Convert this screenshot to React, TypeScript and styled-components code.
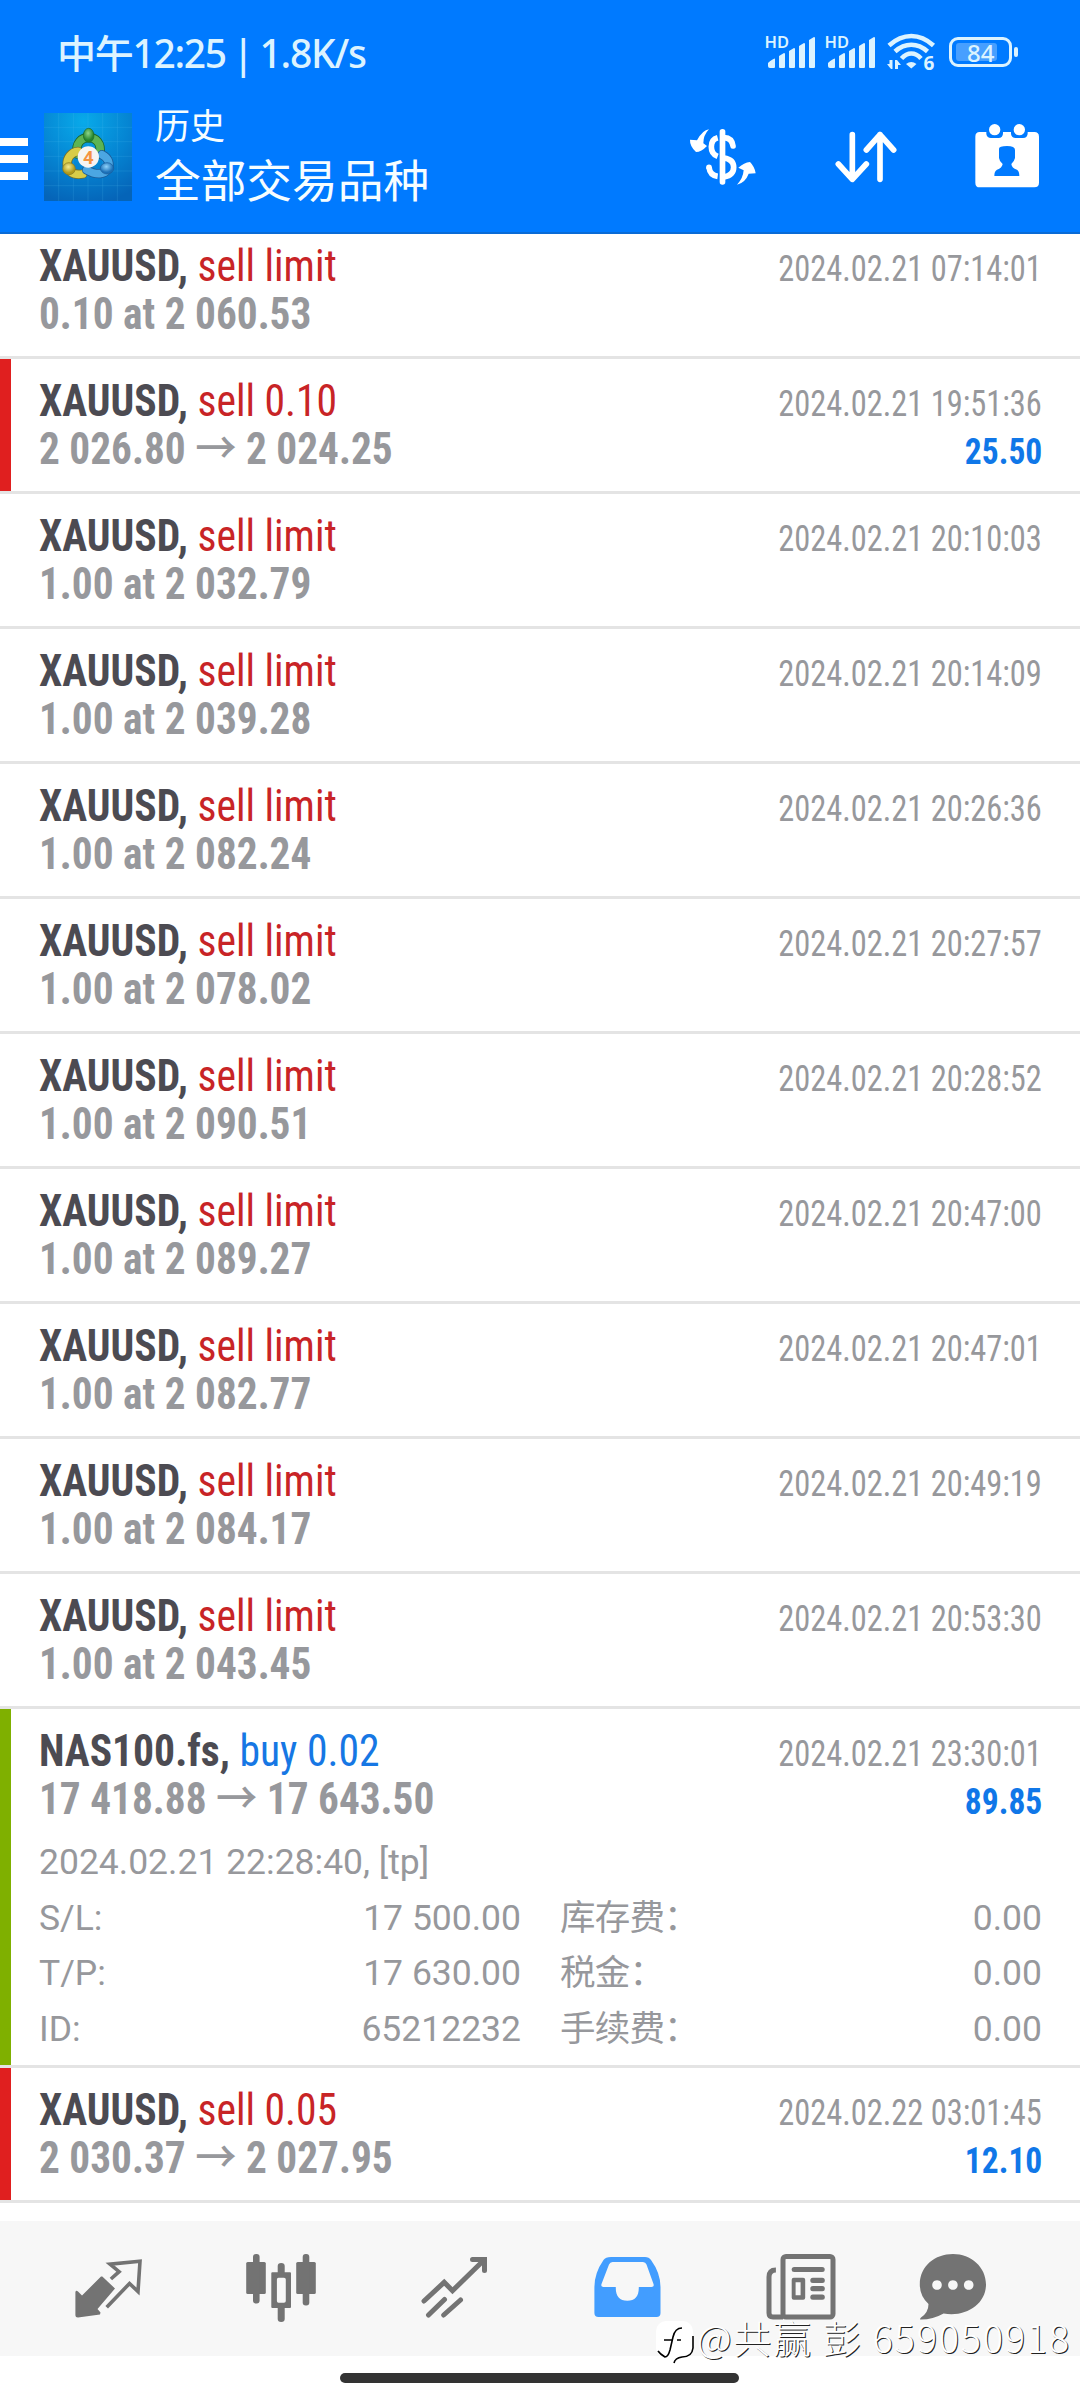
import React from 'react';
import styled, { createGlobalStyle } from 'styled-components';

type Side = 'sell' | 'buy';

interface HistoryItem {
  symbol: string;
  side: Side;
  action: string;
  price: string;
  closePrice?: string;
  time: string;
  profit?: string;
  marker?: string;
  comment?: string;
  details?: string[][];
}

const RED = '#e01f1f';
const GREEN = '#7fb000';

const limit = (price: string, time: string): HistoryItem => ({
  symbol: 'XAUUSD',
  side: 'sell',
  action: 'sell limit',
  price,
  time,
});

const items: HistoryItem[] = [
  limit('0.10 at 2 060.53', '2024.02.21 07:14:01'),
  {
    symbol: 'XAUUSD',
    side: 'sell',
    action: 'sell 0.10',
    price: '2 026.80',
    closePrice: '2 024.25',
    time: '2024.02.21 19:51:36',
    profit: '25.50',
    marker: RED,
  },
  limit('1.00 at 2 032.79', '2024.02.21 20:10:03'),
  limit('1.00 at 2 039.28', '2024.02.21 20:14:09'),
  limit('1.00 at 2 082.24', '2024.02.21 20:26:36'),
  limit('1.00 at 2 078.02', '2024.02.21 20:27:57'),
  limit('1.00 at 2 090.51', '2024.02.21 20:28:52'),
  limit('1.00 at 2 089.27', '2024.02.21 20:47:00'),
  limit('1.00 at 2 082.77', '2024.02.21 20:47:01'),
  limit('1.00 at 2 084.17', '2024.02.21 20:49:19'),
  limit('1.00 at 2 043.45', '2024.02.21 20:53:30'),
  {
    symbol: 'NAS100.fs',
    side: 'buy',
    action: 'buy 0.02',
    price: '17 418.88',
    closePrice: '17 643.50',
    time: '2024.02.21 23:30:01',
    profit: '89.85',
    marker: GREEN,
    comment: '2024.02.21 22:28:40, [tp]',
    details: [
      ['S/L:', '17 500.00', '库存费：', '0.00'],
      ['T/P:', '17 630.00', '税金：', '0.00'],
      ['ID:', '65212232', '手续费：', '0.00'],
    ],
  },
  {
    symbol: 'XAUUSD',
    side: 'sell',
    action: 'sell 0.05',
    price: '2 030.37',
    closePrice: '2 027.95',
    time: '2024.02.22 03:01:45',
    profit: '12.10',
    marker: RED,
  },
];

const GlobalStyle = createGlobalStyle`
  body {
    margin: 0;
    background: #fff;
    font-family: Roboto, "Noto Sans CJK SC", sans-serif;
  }
`;

const Screen = styled.div`
  position: relative;
  width: 1080px;
  height: 2400px;
  overflow: hidden;
  display: flex;
  flex-direction: column;
  background: #fff;
`;

const Header = styled.header`
  box-sizing: border-box;
  height: 234px;
  flex: none;
  background: #007aff;
  border-bottom: 2px solid #0a6bd6;
`;

const StatusBar = styled.div`
  display: flex;
  align-items: center;
  height: 104px;
  padding: 0 68px 0 57px;
  box-sizing: border-box;
  color: #dcf3ff;
`;

const Clock = styled.div`
  flex: 1;
  font: 500 39px/1 "Noto Sans", "Noto Sans CJK SC", sans-serif;
  white-space: pre;
  letter-spacing: -1.3px;
  word-spacing: -2px;
`;

const StatusSvg = styled.svg`
  flex: none;
  overflow: visible;
  fill: #dcf3ff;
`;

const Battery = styled.div`
  position: relative;
  box-sizing: border-box;
  width: 63px;
  height: 30px;
  margin-left: 15px;
  padding: 3px 4px;
  border: 3px solid #dcf3ff;
  border-radius: 9px;

  &::after {
    content: '';
    position: absolute;
    right: -9px;
    top: 7px;
    width: 4px;
    height: 10px;
    border-radius: 2px;
    background: #dcf3ff;
  }
`;

const Charge = styled.div`
  width: 41px;
  height: 18px;
  border-radius: 3px;
  background: #479fff;
  font: 500 24px/19px "Noto Sans", sans-serif;
  text-indent: 11px;
  white-space: nowrap;
`;

const Toolbar = styled.div`
  display: flex;
  align-items: flex-start;
  height: 128px;
`;

const Burger = styled.div`
  display: flex;
  flex-direction: column;
  gap: 9px;
  width: 28px;
  margin: 34px 16px 0 0;
`;

const BurgerLine = styled.span`
  height: 8px;
  background: #fff;
`;

const Logo = styled.svg`
  margin: 9px 23px 0 0;
`;

const Titles = styled.div`
  flex: 1;
  margin-top: -1px;
  color: #f6fdff;
  font-family: "Noto Sans CJK SC", sans-serif;
`;

const Caption = styled.div`
  font-size: 35px;
  line-height: 42px;
`;

const Title = styled.div`
  margin-top: 3px;
  font-size: 45.7px;
  line-height: 60px;
`;

const Actions = styled.div`
  display: flex;
  margin: 20px 41px 0 0;
  gap: 78px;
  fill: #fff;
`;

const List = styled.main`
  flex: none;
  height: 1987px;
  overflow: hidden;
`;

const Row = styled.div<{ $marker?: string; $first?: boolean }>`
  box-sizing: border-box;
  min-height: 135px;
  margin-top: ${(p) => (p.$first ? '-10px' : '0')};
  padding: 18px 38px 0 39px;
  border-bottom: 3px solid #e4e4e4;
  box-shadow: ${(p) => (p.$marker ? `inset 11px 0 ${p.$marker}` : 'none')};
`;

const Line = styled.div`
  display: flex;
  align-items: baseline;
  justify-content: space-between;
  height: 48px;
  line-height: 48px;
  white-space: pre;
  font-family: "Roboto Condensed", Roboto, sans-serif;
  font-stretch: 75%;
`;

const Symbol = styled.span`
  font-size: 44px;
  font-weight: 700;
  color: #4c4b52;
  transform: scaleX(0.945);
  transform-origin: left;
`;

const Action = styled.span<{ $side: Side }>`
  font-weight: 400;
  color: ${(p) => (p.$side === 'sell' ? '#c82426' : '#1677e4')};
`;

const Price = styled.span`
  font-size: 44px;
  font-weight: 700;
  color: #97989c;
  transform: scaleX(0.938);
  transform-origin: left;
`;

const Arrow = styled.span`
  font-family: "Noto Sans CJK SC", sans-serif;
  font-weight: 500;
  line-height: 0;
`;

const Time = styled.span`
  font-size: 36px;
  color: #97989c;
  transform: scaleX(0.9);
  transform-origin: right;
`;

const Profit = styled.span`
  font-size: 36px;
  font-weight: 700;
  color: #1077e8;
  transform: scaleX(0.93);
  transform-origin: right;
`;

const Comment = styled.div`
  margin-top: 12px;
  font-size: 35.5px;
  line-height: 55.5px;
  color: #97989c;
`;

const Details = styled.div`
  display: grid;
  grid-template-columns: 120px 362px 1fr 120px;
  padding-bottom: 8px;
  font-size: 35.5px;
  line-height: 55.5px;
  color: #97989c;
`;

const Cell = styled.div<{ $value?: boolean; $label?: boolean }>`
  height: 55.5px;
  text-align: ${(p) => (p.$value ? 'right' : 'left')};
  padding-left: ${(p) => (p.$label ? '39px' : '0')};
  letter-spacing: ${(p) => (p.$label ? '-0.8px' : '0')};
  white-space: nowrap;
`;

const TabBar = styled.nav`
  display: grid;
  grid-template-columns: repeat(5, 173px) 133px;
  justify-items: center;
  align-items: start;
  flex: none;
  height: 135px;
  padding-left: 21px;
  box-sizing: border-box;
  background: #f7f7f7;
`;

const TabIcon = styled.svg<{ $active?: boolean }>`
  margin-top: 27px;
  fill: ${(p) => (p.$active ? '#429dff' : '#737373')};
  stroke: none;
`;

const HomeBar = styled.div`
  width: 399px;
  height: 10px;
  margin: 17px 0 0 340px;
  border-radius: 5px;
  background: #333;
`;

const Watermark = styled.div`
  position: absolute;
  left: 655px;
  top: 2316px;
  display: flex;
  align-items: flex-start;
  gap: 2px;
  height: 46px;
  color: #fff;
  font: 300 38px/41px "Noto Sans CJK SC", sans-serif;
  letter-spacing: 1.7px;
  text-shadow: 1px 1px 0 #222;
  white-space: pre;
`;

const Signal = () => (
  <StatusSvg width="60" height="36" viewBox="0 0 60 36">
    <text x="-1.500" y="14" fontFamily="Noto Sans" fontWeight="600" fontSize="16.5">HD</text>
    <path d="M2 32v-3q4-4 7-4.500V33q0 1-1 1H4q-2 0-2-2zM13 22l5-3q1 0 1 1v13q0 1-1 1h-4q-1 0-1-1zM23 17l5-3q1 0 1 1v18q0 1-1 1h-4q-1 0-1-1zM33 12l5-3q1 0 1 1v23q0 1-1 1h-4q-1 0-1-1zM43 6l5-3q1 0 1 1v29q0 1-1 1h-4q-1 0-1-1z" />
  </StatusSvg>
);

const Wifi = () => (
  <StatusSvg width="48" height="40" viewBox="-1 0 48 40">
    <g fill="none" stroke="#dcf3ff" strokeWidth="4.600">
      <path d="M2 13.500Q12.500 4 24.300 4T46.500 13.500" />
      <path d="M8 19.500Q15.500 12.800 24.300 12.800T40.500 19.500" />
      <path d="M14.500 26.500Q19 21.500 24.300 21.500T34 26.500" />
    </g>
    <path d="M19 32q5.300-4 10.500 0l-5.200 4.500zM5.500 28v9H4l-4-5h2.500v-4zM8 37V28h2l4 5h-3v4z" />
    <text x="36.500" y="38" fontFamily="Noto Sans" fontWeight="700" fontSize="19">6</text>
  </StatusSvg>
);

const AppLogo = () => (
  <Logo width="88" height="88" viewBox="12 15 264 264">
    <defs>
      <radialGradient id="sky" cx="45%" cy="10%" r="95%">
        <stop offset="0" stopColor="#08aaea" />
        <stop offset="0.55" stopColor="#0584d2" />
        <stop offset="1" stopColor="#0564b8" />
      </radialGradient>
      <radialGradient id="green" cx="45%" cy="35%">
        <stop offset="0" stopColor="#8ed68a" />
        <stop offset="1" stopColor="#25852c" />
      </radialGradient>
      <radialGradient id="yellow" cx="45%" cy="35%">
        <stop offset="0" stopColor="#f4ec92" />
        <stop offset="1" stopColor="#b09a1c" />
      </radialGradient>
      <radialGradient id="blue" cx="45%" cy="35%">
        <stop offset="0" stopColor="#8fd2fa" />
        <stop offset="1" stopColor="#1a70b8" />
      </radialGradient>
    </defs>
    <path fill="url(#sky)" d="M12 15h264v264H12z" />
    <path d="M56 15v264M100 15v264M144 15v264M188 15v264M232 15v264M12 58h264M12 101h264M12 145h264M12 189h264M12 233h264" stroke="#5cc4f2" strokeOpacity="0.25" strokeWidth="2" />
    <g fill="none" strokeLinecap="round">
      <path d="M112 138C98 72 194 72 179 138" stroke="#1d6527" strokeWidth="28" />
      <path d="M112 138C98 72 194 72 179 138" stroke="#5cb454" strokeWidth="23" />
      <path d="M114 130C72 134 64 208 128 198" stroke="#76702a" strokeWidth="28" />
      <path d="M114 130C72 134 64 208 128 198" stroke="#d8cc48" strokeWidth="23" />
      <path d="M186 140C228 160 204 222 140 186" stroke="#1a5b98" strokeWidth="28" />
      <path d="M186 140C228 160 204 222 140 186" stroke="#4ba6e2" strokeWidth="23" />
    </g>
    <ellipse cx="146" cy="82" rx="16" ry="21" fill="url(#green)" stroke="#1d6527" strokeWidth="2" />
    <ellipse cx="87" cy="182" rx="19" ry="18" fill="url(#yellow)" stroke="#857720" strokeWidth="2" />
    <ellipse cx="201" cy="181" rx="20" ry="17" fill="url(#blue)" stroke="#1a5b98" strokeWidth="2" />
    <circle cx="145" cy="147" r="32" fill="#f6f4f2" />
    <text x="145" y="167" textAnchor="middle" fontFamily="Roboto" fontWeight="700" fontSize="56" fill="#f49341">4</text>
  </Logo>
);

const HistoryRow = ({ item, first }: { item: HistoryItem; first: boolean }) => (
  <Row $marker={item.marker} $first={first}>
    <Line>
      <Symbol>
        {item.symbol}, <Action $side={item.side}>{item.action}</Action>
      </Symbol>
      <Time>{item.time}</Time>
    </Line>
    <Line>
      <Price>
        {item.price}
        {item.closePrice && <> <Arrow>→</Arrow> {item.closePrice}</>}
      </Price>
      {item.profit && <Profit>{item.profit}</Profit>}
    </Line>
    {item.comment && <Comment>{item.comment}</Comment>}
    {item.details && (
      <Details>
        {item.details.map((cells) =>
          cells.map((text, i) => (
            <Cell key={cells[0] + i} $value={i % 2 === 1} $label={i === 2}>{text}</Cell>
          ))
        )}
      </Details>
    )}
  </Row>
);

const App: React.FC = () => (
  <Screen>
    <GlobalStyle />
    <Header>
      <StatusBar>
        <Clock>中午12:25 | 1.8K/s</Clock>
        <Signal />
        <Signal />
        <Wifi />
        <Battery>
          <Charge>84</Charge>
        </Battery>
      </StatusBar>
      <Toolbar>
        <Burger>
          <BurgerLine />
          <BurgerLine />
          <BurgerLine />
        </Burger>
        <AppLogo />
        <Titles>
          <Caption>历史</Caption>
          <Title>全部交易品种</Title>
        </Titles>
        <Actions>
          {/* currency exchange */}
          <svg width="68" height="65" viewBox="85 372 204 195">
            <rect x="177" y="387" width="17" height="167" rx="8" />
            <g fill="none" stroke="#fff" strokeWidth="17">
              <path d="M171 413Q152 418 152 440T171 469" />
              <path d="M190 413Q214 414 217 438" strokeLinecap="round" />
              <path d="M190 474Q219 478 219 502T190 531" />
              <path d="M145 502Q148 526 171 529" />
            </g>
            <circle cx="145" cy="502" r="8.500" />
            <path d="M145 388Q126 390 109 421L88 419Q87 438 106 456Q122 456 139 438L128 430Q128 405 145 388z" />
            <path d="M229 554Q247 536 249 511L233 503Q250 488 268 486Q282 500 285 520L264 521Q254 548 229 554z" />
          </svg>
          {/* sort */}
          <svg width="62" height="65" viewBox="522 372 186 195">
            <path d="M574 404V538M532 492L574 538L616 492M657 538V404M616 450L657 404L698 450" fill="none" stroke="#fff" strokeWidth="17" strokeLinecap="round" strokeLinejoin="round" />
          </svg>
          {/* account calendar */}
          <svg width="64" height="65" viewBox="944 372 192 195">
            <path fillRule="evenodd" d="M958 396H978V402Q980 414 992 414H1014Q1028 414 1028 400V396H1052V402Q1054 414 1066 414H1088Q1102 414 1102 400V396H1122Q1136 396 1136 410V548Q1136 562 1122 562H958Q945 562 945 548V410Q945 396 958 396zM1016 446Q1016 438 1040 438Q1064 438 1064 450V474Q1062 484 1053 492Q1054 504 1070 509Q1077 513 1077 528H1002Q1002 513 1010 509Q1025 504 1027 492Q1017 484 1016 474z" />
            <circle cx="1003" cy="389" r="17" />
            <circle cx="1077" cy="389" r="17" />
          </svg>
        </Actions>
      </Toolbar>
    </Header>

    <List>
      {items.map((item, i) => (
        <HistoryRow key={item.time} item={item} first={i === 0} />
      ))}
    </List>

    <TabBar>
      <TabIcon width="80" height="80" viewBox="68 2248 80 80">
        <path d="M102.300 2276.500L115 2288.500L97.500 2309L100.500 2312.500L100 2314.500L78 2317.500Q75.400 2317.500 75.400 2315V2292Q76 2290 78 2291.500L82 2295.500L101 2276.500z" />
        <path d="M110.900 2279L119.100 2271.700L110 2264.200L140 2261.300L138 2291.500L129.500 2283.500L106.700 2307.300" fill="none" stroke="#737373" strokeWidth="3.600" />
      </TabIcon>
      <TabIcon width="80" height="80" viewBox="241 2248 80 80">
        <rect x="246.200" y="2262" width="19.600" height="32" rx="1.500" />
        <rect x="253" y="2254" width="6.600" height="49.500" rx="3" />
        <path fillRule="evenodd" d="M272.300 2272.300H290Q291 2272.300 291 2273.300V2307Q291 2308 290 2308H272.300Q271.300 2308 271.300 2307V2273.300Q271.300 2272.300 272.300 2272.300zM278.500 2277.700Q276.900 2277.700 276.900 2279.500V2301Q276.900 2302.700 278.500 2302.700H284Q285.800 2302.700 285.800 2301V2279.500Q285.800 2277.700 284 2277.700z" />
        <path d="M277.700 2273V2266Q277.700 2263 281.200 2263T284.700 2266V2273zM277.700 2307V2319Q277.700 2322 281.200 2322T284.700 2319V2307z" />
        <rect x="296.200" y="2262" width="19.600" height="32" rx="1.500" />
        <rect x="302.700" y="2254" width="6.600" height="51.500" rx="3" />
      </TabIcon>
      <TabIcon width="80" height="80" viewBox="414 2248 80 80">
        <path d="M424 2301L444.200 2282.300L452.500 2290.700L483 2261M472.500 2259.500H484.500V2270.500M428.500 2315L444.500 2299.500M443.700 2315L460.500 2300" fill="none" stroke="#737373" strokeWidth="5" strokeLinecap="round" strokeLinejoin="miter" />
      </TabIcon>
      <TabIcon $active width="80" height="80" viewBox="587 2248 80 80">
        <path fillRule="evenodd" d="M611 2257H645Q649 2257 651 2260Q660.500 2273 660.500 2287V2313Q660.500 2317 656.500 2317H598.500Q594.400 2317 594.400 2313V2287Q594.400 2273 603.500 2260Q605.500 2257 611 2257zM612.500 2262Q610 2262 609 2264.500L601.500 2284Q600.500 2287 603.500 2287H615.800C615.500 2296 619.500 2300.700 627.300 2300.700S639 2296 638.800 2287H651.500Q654.500 2287 653.500 2284L646.500 2264.500Q645.500 2262 643 2262z" />
      </TabIcon>
      <TabIcon width="80" height="80" viewBox="760 2248 80 80">
        <g fill="none" stroke="#737373" strokeWidth="5">
          <rect x="783" y="2256.500" width="50" height="60.500" rx="3" />
          <path d="M775.900 2270Q769 2270 769 2277V2313Q769 2317 773 2317H783" />
        </g>
        <rect x="791.700" y="2267" width="33" height="5" rx="2.500" />
        <path fillRule="evenodd" d="M793.700 2277.700H803.200Q805.200 2277.700 805.200 2279.700V2297.700Q805.200 2299.700 803.200 2299.700H793.700Q791.700 2299.700 791.700 2297.700V2279.700Q791.700 2277.700 793.700 2277.700zM795.600 2282.300V2295.300H800.600V2282.300z" />
        <rect x="810.300" y="2277.700" width="14.500" height="5.200" rx="2.500" />
        <rect x="810.300" y="2286" width="14.500" height="5.200" rx="2.500" />
        <rect x="810.300" y="2294.600" width="14.500" height="5.200" rx="2.500" />
      </TabIcon>
      <TabIcon width="80" height="80" viewBox="913 2248 80 80">
        <path fillRule="evenodd" d="M928.500 2304Q919.800 2296 919.800 2284.500C919.800 2266 935 2254 953 2254S986 2267 986 2284.500C986 2304 966 2317.500 943.600 2313.500Q933 2319.500 921 2319.500Q919 2319.500 921 2317.500Q928.500 2312.500 928.500 2304zM937 2280.200a4.800 4.800 0 1 0 .01 0zM952.900 2280.200a4.800 4.800 0 1 0 .01 0zM968.700 2280.200a4.800 4.800 0 1 0 .01 0z" />
      </TabIcon>
    </TabBar>
    <HomeBar />

    <Watermark>
      <svg width="40" height="48" viewBox="0 0 40 48">
        <rect x="1" y="5" width="37" height="37" rx="10" fill="#fff" />
        <path d="M27 12Q20 12 18 21L15 34Q13 41 10 41Q5 38 3 35M9 24H17M22 24H26M38 20V32Q37 41 27 41Q20 42 19 47" fill="none" stroke="#000" strokeWidth="1.600" />
      </svg>
      <span>@共赢 彭 659050918</span>
    </Watermark>
  </Screen>
);

export default App;
